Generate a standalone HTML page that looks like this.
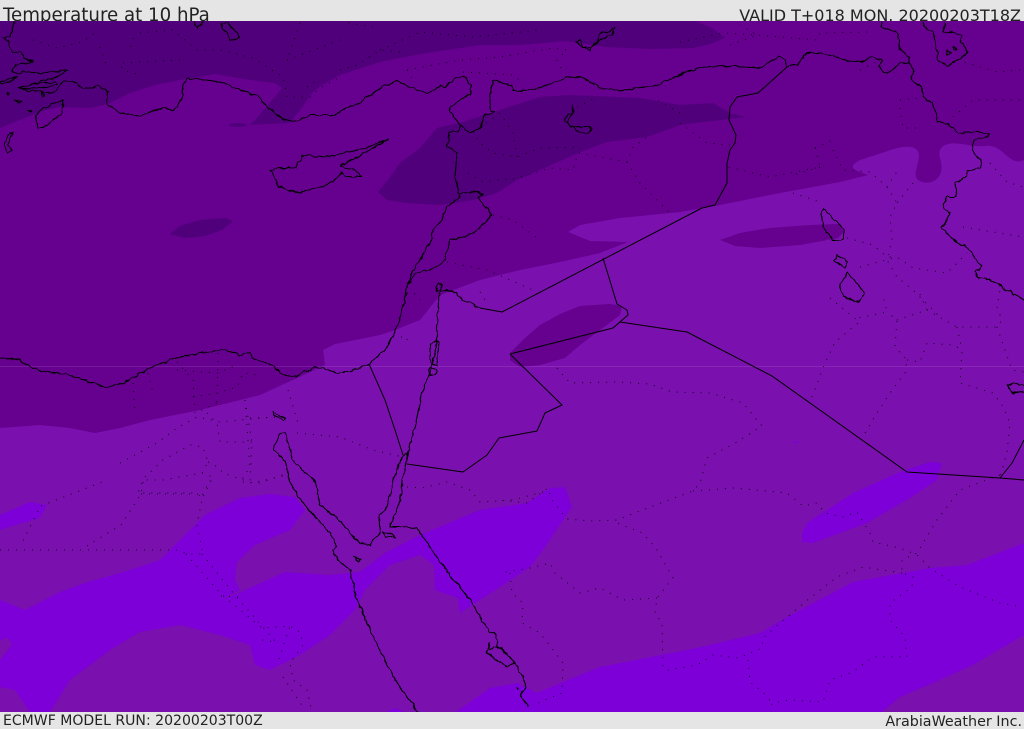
<!DOCTYPE html>
<html><head><meta charset="utf-8"><style>
html,body{margin:0;padding:0;background:#e5e5e5;width:1024px;height:729px;overflow:hidden}
svg{display:block}
text{font-family:"DejaVu Sans","Liberation Sans",sans-serif;fill:#222}
.c{fill:none;stroke:#000;stroke-width:1.1;stroke-linejoin:round}
.b{fill:none;stroke:#000;stroke-width:1;stroke-linejoin:round}
.d{fill:none;stroke:#000;stroke-width:1;stroke-dasharray:1 7;stroke-opacity:.85}
</style></head><body>
<svg width="1024" height="729" viewBox="0 0 1024 729" xmlns="http://www.w3.org/2000/svg">
<defs><filter id="w" filterUnits="userSpaceOnUse" x="0" y="0" width="1024" height="729" color-interpolation-filters="sRGB"><feTurbulence type="fractalNoise" baseFrequency="0.16" numOctaves="2" seed="4" result="n"/><feDisplacementMap in="SourceGraphic" in2="n" scale="4" xChannelSelector="R" yChannelSelector="G"/></filter></defs>
<rect width="1024" height="729" fill="#e5e5e5"/>
<text x="3" y="21" font-size="18.2">Temperature at 10 hPa</text>
<text x="1021" y="21" font-size="16" text-anchor="end">VALID T+018 MON. 20200203T18Z</text>
<clipPath id="m"><rect x="0" y="21" width="1024" height="691"/></clipPath>
<g clip-path="url(#m)">
<rect x="0" y="21" width="1024" height="691" fill="#65008f"/>
<!-- dark top -->
<path fill="#50007a" d="M0,21V128L20,120 45,110 60,107 90,108 108,104 130,93 155,85 180,80 215,74 250,80 275,83 282,88 270,103 255,120 250,125 290,123 300,110 313,92 322,85 340,75 380,62 420,54 480,45 520,45 566,41 607,47 650,49 693,48 710,44 725,38 712,28 695,21Z"/>
<path fill="#50007a" d="M378,192 388,180 400,163 420,148 437,128 463,122 500,110 540,97 570,95 640,98 680,105 713,103 730,113 745,117 730,119 703,122 680,125 647,137 607,142 578,153 540,170 517,180 497,193 473,200 440,205 407,203 387,200Z"/>
<path fill="#50007a" d="M170,234 180,226 200,220 225,218 233,221 222,230 205,236 185,238Z"/>
<ellipse cx="238" cy="125" rx="9" ry="2" fill="#50007a"/>
<!-- light -->
<path fill="#7a10ad" d="M0,428 40,425 70,428 95,433 120,428 150,420 200,410 260,395 310,372 325,365 323,350 335,344 380,335 395,330 420,320 440,295 480,280 520,270 560,262 600,253 628,242 590,241 568,232 580,225 620,218 680,212 720,205 780,193 840,182 868,175 C860,172 852,170 853,166 C855,160 870,157 885,152 C900,146 918,143 919,155 C919,165 912,175 918,180 C925,185 938,183 941,172 C944,160 935,155 942,147 C950,140 965,145 975,146 C985,147 990,143 1000,150 C1008,156 1014,165 1024,160 V712H0Z"/>
<!-- mid patches in light -->
<path fill="#65008f" d="M720,240 740,233 770,228 810,225 838,224 845,230 838,238 800,245 760,248 735,246Z"/>
<path fill="#65008f" d="M510,353 525,338 540,325 560,314 580,306 610,304 622,306 620,315 600,330 580,345 565,358 540,365 520,367 510,360Z"/>
<!-- bright -->
<path fill="#7d00d8" d="M0,600 25,610 60,592 85,583 130,570 160,560 185,535 205,515 240,498 270,494 295,497 305,510 290,530 255,545 237,562 235,580 240,590 222,600 245,590 285,572 330,575 360,572 385,553 420,535 480,510 500,507 527,503 550,488 565,487 572,507 543,550 530,567 500,587 480,600 460,613 458,598 435,590 434,565 420,555 390,565 365,590 355,610 330,635 300,655 270,670 255,665 250,645 220,635 180,625 140,632 110,650 70,680 50,712H30L15,690 0,687V660L12,645 8,638 0,640Z"/>
<path fill="#7d00d8" d="M0,515 30,502 47,505 40,518 15,525 0,530Z"/>
<path fill="#7d00d8" d="M802,533 802,542 813,543 867,523 910,498 937,480 942,463 930,462 900,472 853,493 807,523Z"/>
<path fill="#7d00d8" d="M456,712 490,688 517,683 537,693 563,682 600,667 697,648 760,633 787,617 853,582 930,568 967,565 1024,543V635L973,665 933,683 900,697 882,712Z"/>
<path fill="#7d00d8" d="M386,712 395,708 405,712Z"/>
<path fill="#7d00d8" d="M791,442 796,441 800,442 795,443Z"/>
<rect x="0" y="366" width="1024" height="1" fill="#fff" opacity=".1"/>
<!-- dotted borders -->
<path class="d" d="M557,368 570,383 617,382 650,384 672,392 710,393 743,403 762,426 737,442 707,458 700,483 693,491 650,507 617,520 590,521 567,519 552,500 548,488 527,503 500,500M693,491 733,488 767,491 787,493 803,506 817,503 825,513 843,517 857,512 870,533 873,542 900,548 917,555 930,568 960,587 1000,603 1023,607"/>
<path class="d" d="M1000,475 960,490 937,520 917,553 902,560 902,573 913,577 912,587 890,603 890,620 905,637 907,657 873,657 853,672 830,680 823,702 790,700 772,703 771,712M902,573 863,567 837,577 810,598 780,623 763,638 762,648 738,658 713,655 697,665 668,670 663,668 662,623 655,613 657,598 673,578 657,550 643,533 617,523M657,598 623,600 600,588 580,593 555,573 550,563 530,568 500,573M510,573 512,593 523,603 522,623 540,633 563,663 562,693 533,705M748,660 750,682 763,692 772,703"/>
<path class="d" d="M812,397 825,363 835,342 858,323 858,318 887,312 883,295M830,298 857,320M865,433 877,413 892,390 905,373 907,360 895,347 897,320 887,312M897,320 927,310 918,290M927,310 957,327 997,327 1002,320 997,307 1000,290M907,360 920,362 927,343 953,345 962,350 960,383 993,393 1002,405 1010,423 1007,453 1000,477M957,327 962,350M997,327 1012,370 1024,372"/>
<path class="d" d="M680,42 723,33 757,35 817,40 820,33 870,32M730,45 757,35 740,25M900,100 920,98M900,108 903,128 920,128M953,117 973,100 1020,100M957,60 997,72 1020,70M860,70 880,60M680,123 707,143 730,145M815,148 837,138M815,148 820,167 770,177 728,167M820,167 793,175M833,150 843,170 870,172 887,187 900,167M887,187 897,203 890,217 892,240 887,260 897,277 913,290 940,317M793,193 823,203M913,183 897,203M847,238 873,245 887,257 897,257M860,267 897,257 913,268 947,273 967,253M963,227 1023,237M990,163 1007,182 1023,187"/>
<path class="d" d="M340,70 357,65 380,50 400,52M373,27 343,22M380,50 420,32 473,37 540,30M407,70 460,60 500,57 553,48 567,50 557,60 562,70M463,72 513,75 523,83M407,70 413,80M500,113 473,133 480,143 493,153 517,157 540,148 577,147M517,157 513,133 500,113M577,107 597,97M680,113 657,100M468,173 483,182 517,178 550,168 573,170 578,153 627,162 633,147 647,137M627,162 640,183 670,213M493,215 513,220 537,238M447,262 487,270 533,290M407,293 413,292 420,300M480,292 487,303M393,337 407,337 408,347"/>
<path class="d" d="M297,433 340,437 373,450 403,457M245,400 250,467 240,482 260,483 288,473M288,390 298,423M250,418 283,417M407,487 422,488 447,482 470,490 480,502 513,500 550,490"/>
<path class="d" d="M133,383 135,413M148,373 153,393M177,362 193,380 195,413 217,403M218,353 217,403M177,370 217,373 237,365M193,397 217,393 237,387 243,373 260,375M245,400 248,417 252,443 250,483M207,413 217,423 220,442 252,442M120,463 157,443 177,428 197,417 220,422 273,417M145,477 163,460 190,445 203,447 208,462 202,473 163,480 143,480 138,493 193,493 203,497M208,462 218,467 223,473 252,483 287,475M202,473 213,477 203,497"/>
<path class="d" d="M0,550H176L188,554 203,554 197,525 203,494 210,480M141,494 203,494M143,482 141,494 121,525 88,545 83,552M41,506 102,482M38,511 21,545M186,554 221,594 262,628 290,626 300,632 303,645 290,663 293,680 307,690 312,712M202,554 234,594 276,642 262,640M221,596 238,597M279,659 290,626M283,677 303,707"/>
<path class="d" d="M33,40 57,48 82,42 95,33M100,47 107,67M140,33 173,30 197,50 220,50 253,58 283,77 287,97 310,97 320,88 340,77M180,60 120,63 123,70 140,75M133,38 130,50M287,60 340,40M300,23 287,60M307,87 317,80"/>
<!-- straight borders -->
<path class="b" d="M787,67 758,93 737,97 730,107 729,120 736,135 735,143 730,150 727,163 727,183 715,205 702,208 502,312 480,308M510,354 613,328 628,315 627,310 617,304 603,258M510,354 562,405 545,413 537,431 499,438 487,455 463,472 407,464M620,322 687,332 772,376 907,472 1000,478 1024,480M1000,478 1012,463 1024,440M369,364 385,400 395,430 403,455"/>
<!-- coasts -->
<g filter="url(#w)">
<path class="c" d="M14,21 13,30 10,37 2,38 8,42 12,53 20,52 25,58 32,62 28,63 15,65 12,70 15,74 22,72 40,73 68,70 60,75 53,79 43,80 37,83 20,87 23,90 50,93 57,90 63,82 73,81 82,88 93,88 98,85 108,92 107,103 118,112 130,115 140,116 150,112 165,108 175,110 181,100 183,85 187,79 200,79 220,82 240,90 258,96 267,107 280,117 290,121 300,120 310,115 335,115 345,108 360,103 368,97 385,85 397,81 405,85 428,93 435,90 440,85 445,88 455,78 463,76 471,85 471,93 460,100 450,108 450,112 460,125 458,132 450,132 447,145 457,153 455,177 460,197 447,207 442,220 433,230 432,240 420,260 412,272 407,287 403,307 397,327 387,347 369,364 353,370 338,373 323,368 313,368 295,377 283,375 272,365 253,358 250,352 240,355 225,350 200,353 175,358 150,368 125,382 105,388 90,382 70,375 45,372 25,365 20,360 0,358"/>
<path class="c" d="M18,88 35,83 55,82 57,85 40,88 23,89Z"/>
<path class="c" d="M460,125 466,130 470,133 480,128 484,115 495,112 490,110 490,100 493,80 512,85 513,91 533,90 547,85 570,77 583,78 600,88 623,90 657,85 680,75 700,67 725,66 760,68 770,62 780,57 785,60 787,67 797,65 807,53 823,53 850,61 862,62 870,57 882,60 880,67 883,73 890,72 900,63 910,63 913,70 912,80 922,87 923,97 933,103 938,123 947,123 958,133 975,132 990,133 987,137 973,140 972,150 982,163 980,168 967,172 965,178 955,183 957,197 947,197 943,207 950,213 942,228 957,243 967,247 982,267 975,272 978,278 990,280 1024,300"/>
<path class="c" d="M881,22 882,27 898,33 900,50 910,57 910,63"/>
<path class="c" d="M923,22 925,28 933,32 937,53 938,60 947,66 957,60 968,53 960,40 962,35 950,32 943,32 945,22"/>
<path class="c" d="M480,308 462,300 457,293 447,290 439,293 437,327 437,343 430,373 422,393 417,417 407,457 408,453 403,477 400,500 390,527 400,527 417,528 437,557 450,575 470,600 482,620 490,632 495,633 497,640 497,645 507,655 515,663 523,677 526,687 520,695 528,706"/>
<path class="c" d="M490,643 487,653 507,667 515,663 507,655 502,648 495,647 490,650Z"/>
<path class="c" d="M408,454 403,455 393,480 387,507 379,517 380,533 370,545 360,543 337,518 320,505 315,482 293,460 285,432 280,433 273,450 285,460 290,483 303,503 330,533 337,547 333,550 338,560 350,570 357,600 375,640 395,680 418,712"/>
<path class="c" d="M460,193 477,192 483,195 478,198 492,215 475,232 460,238 450,240 445,260 430,270 415,273 407,287"/>
<path class="c" d="M430,345 437,340 439,342 437,365 431,365 430,350ZM430,367 436,370 436,374 430,375 428,370ZM439,283 442,286 441,291 437,291 436,286Z"/>
<path class="c" d="M270,170 280,168 295,168 303,155 325,157 345,153 365,148 388,140 370,150 352,160 340,165 345,168 355,170 362,177 345,177 342,172 335,180 322,187 308,190 300,193 285,190 278,185Z"/>
<path class="c" d="M63,100 62,113 45,127 38,128 36,117 40,110Z"/>
<path class="c" d="M222,23 228,23 240,37 230,41 228,35 222,28ZM193,21 198,28 203,21M10,133 12,133 9,145 12,150 7,153 4,143Z"/>
<path class="c" d="M576,42 580,40 583,47 590,47 597,41 600,33 608,32 615,27 612,35 600,40 590,47 590,50 580,45Z"/>
<path class="c" d="M573,106 574,112 567,115 564,120 573,127 585,126 592,129 588,133 580,133 567,123 572,114Z"/>
<path class="c" d="M823,208 828,213 845,230 843,240 833,240 823,227 822,212ZM837,255 848,262 845,267 834,261ZM847,272 865,293 858,302 843,297 840,283 846,277Z"/>
<path class="c" d="M272,412 278,415 285,418 283,420 273,415Z"/>
<path class="c" d="M1008,385 1016,383 1024,386V392L1012,393 1010,390Z"/>
<path class="c" d="M0,82 17,77 10,82 2,84ZM7,93 10,93 9,95ZM15,100 22,102 19,103ZM27,111 32,111 30,112ZM40,92 45,95 43,97ZM383,532 390,534 396,537 385,537ZM354,557 360,559 358,561ZM948,50 951,53 947,55ZM953,47 957,49 953,50ZM517,688 519,689 518,690Z"/>
</g>
</g>
<text x="3" y="725" font-size="14.05">ECMWF MODEL RUN: 20200203T00Z</text>
<text x="1022" y="726" font-size="14.3" text-anchor="end">ArabiaWeather Inc.</text>
</svg>
</body></html>
